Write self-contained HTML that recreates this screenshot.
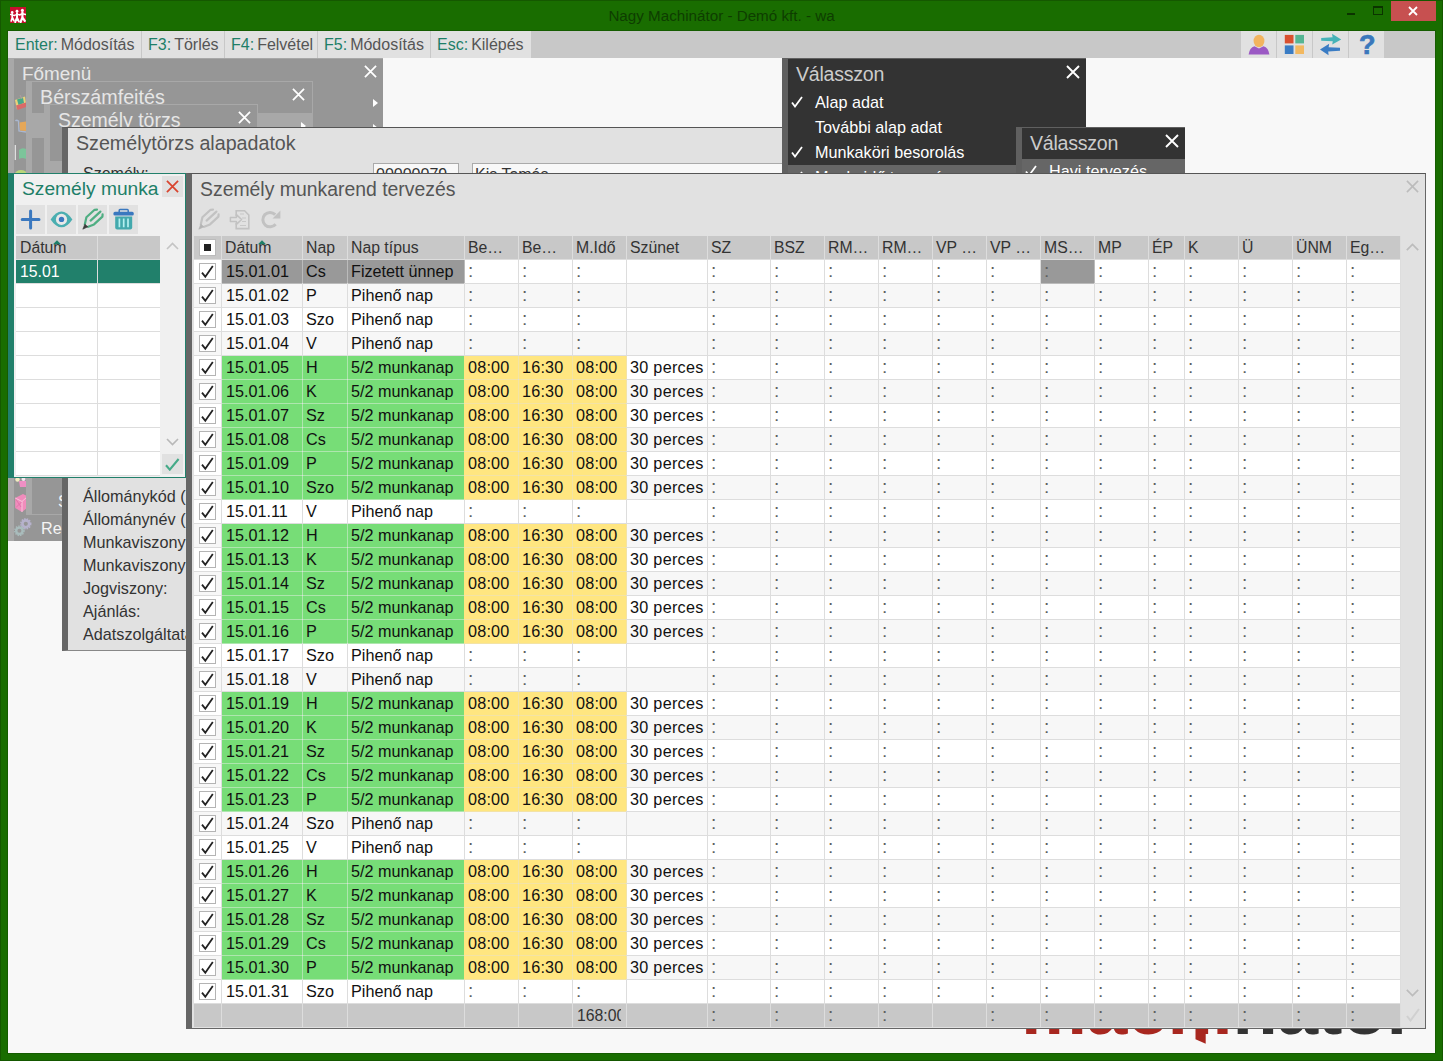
<!DOCTYPE html>
<html lang="hu"><head><meta charset="utf-8"><title>Nagy Machinátor - Demó kft. - wa</title>
<style>
*{box-sizing:border-box;margin:0;padding:0}
html,body{width:1443px;height:1061px;overflow:hidden}
body{background:#196d00;font-family:"Liberation Sans",sans-serif;font-size:16px;color:#222;position:relative}
.abs,.abs *{position:absolute}
div,span,svg{position:absolute;white-space:nowrap}
#client{left:8px;top:31px;width:1427px;height:1022px;background:#f8f8f8;overflow:hidden}
#tb{left:0;top:0;width:1427px;height:27px;background:#c8c8c8}
.tbb{top:0;height:27px;background:#e1e1e1;font-size:16px;line-height:28.4px;color:#555}
.tbb b{font-weight:normal;color:#1e7f68;position:static}
.tbb i{font-style:normal;position:static;color:#555}
.ttl{font-size:19.3px;line-height:24px}
.c{height:23px;line-height:23px;font-size:16.2px;overflow:hidden;color:#111;padding-left:4px}
.g{background:#77dd77;box-shadow:1px 0 0 #aee6ae,0 1px 0 #aee6ae}.y{background:#ffe680;box-shadow:1px 0 0 #f3e3a6,0 1px 0 #f3e3a6}.w{background:#fff}.e{background:#f7f7f7}.s{background:#999;color:#111;box-shadow:1px 0 0 #bbb,0 1px 0 #bbb}
.h{background:#c8c8c8;color:#333;font-size:15.8px}
.c.k{padding-left:3px;color:#606060;font-size:19px;line-height:22.3px}
.col{font-size:16px;line-height:23px;color:#333;width:12px;white-space:pre}
</style></head><body>

<div style="left:0;top:0;width:1443px;height:1061px;border:1px solid #155800"></div>
<div id="titlebar" style="left:0;top:0;width:1443px;height:31px">
<svg style="left:10px;top:7px" width="16" height="16" viewBox="0 0 16 16"><rect width="16" height="16" fill="#c8102e"/><g fill="#fff"><circle cx="2.2" cy="5.4" r="1.3"/><circle cx="7" cy="4.2" r="1.4"/><circle cx="12.4" cy="3.2" r="1.5"/></g><g stroke="#fff" fill="none" stroke-linecap="round" stroke-linejoin="round"><path d="M2.2 6.8V10.4M1.2 14L2.3 10.4L3.9 13.6" stroke-width="1.7"/><path d="M0.2 7.4L2.2 8L4.6 8.6" stroke-width="1.3"/><path d="M7 6V10.6M5.2 15L7 10.6L8.8 14.4" stroke-width="2"/><path d="M4.4 8.4L7 7.4L9.8 7.8" stroke-width="1.4"/><path d="M12.4 5V10.4M10.6 15L12.4 10.4L14.8 13.8" stroke-width="2.2"/><path d="M9.8 7.8L12.4 6.8L15.8 7.6" stroke-width="1.5"/></g></svg>
<span style="left:0;width:1443px;top:6px;text-align:center;font-size:15.2px;line-height:20px;color:#0e3d00">Nagy Machinátor - Demó kft. - wa</span>
<div style="left:1347px;top:13px;width:8px;height:2px;background:#0b3300"></div>
<div style="left:1373px;top:6px;width:10px;height:9px;border:1px solid #0b3300;border-top-width:2px"></div>
<div style="left:1391px;top:1px;width:45px;height:20px;background:#c75050"></div>
<svg style="left:1408px;top:6px" width="10" height="10" viewBox="0 0 10 10"><path d="M1 1L9 9M9 1L1 9" stroke="#fff" stroke-width="1.8"/></svg>
</div>
<div style="left:7px;top:30px;width:1429px;height:1024px;background:#155c00"></div>
<div id="client">
<div id="tb">
<div class="tbb" style="left:0px;width:133px;padding-left:7px"><b>Enter:</b><i style="margin-left:3px">Módosítás</i></div>
<div class="tbb" style="left:134px;width:82px;padding-left:6px"><b>F3:</b><i style="margin-left:3px">Törlés</i></div>
<div class="tbb" style="left:217px;width:92px;padding-left:6px"><b>F4:</b><i style="margin-left:3px">Felvétel</i></div>
<div class="tbb" style="left:310px;width:112px;padding-left:6px"><b>F5:</b><i style="margin-left:3px">Módosítás</i></div>
<div class="tbb" style="left:423px;width:100px;padding-left:6px"><b>Esc:</b><i style="margin-left:3px">Kilépés</i></div>
<div class="tbb" style="left:1233px;width:35px"></div>
<div class="tbb" style="left:1269px;width:35px"></div>
<div class="tbb" style="left:1305px;width:35px"></div>
<div class="tbb" style="left:1341px;width:35px"></div>
<svg style="left:1240px;top:3px" width="22" height="21" viewBox="0 0 22 21"><path d="M0.6 20.6Q1.5 13.5 6.5 12.2L11 14.5L15.5 12.2Q20.5 13.5 21.4 20.6Z" fill="#9b59c4"/><ellipse cx="11" cy="7" rx="5.4" ry="6.2" fill="#f2b45f"/></svg>
<svg style="left:1276px;top:3px" width="22" height="22" viewBox="0 0 22 22"><rect x="0.8" y="0.9" width="8.7" height="8.5" fill="#d9502f"/><rect x="11.3" y="0.9" width="8.7" height="8.5" fill="#55b593"/><rect x="0.8" y="11.4" width="8.7" height="8.6" fill="#3a7cc4"/><rect x="11.3" y="11.4" width="8.7" height="8.6" fill="#f2b860"/></svg>
<svg style="left:1311px;top:2px" width="23" height="23" viewBox="0 0 23 23"><path d="M2.2 5L13.6 4.2L13 0.8L22.2 6.4L13.2 11.6L13.8 8.2L2.2 7.8Z" fill="#45b3b8"/><path d="M21 14.8L9.6 14.2L10.2 10.8L1 16.4L9.6 22.2L9.2 18.4L21 17.8Z" fill="#3a7cc4"/></svg>
<span style="left:1351px;top:-1px;font-size:27px;line-height:30px;font-weight:bold;color:#3a78bc;-webkit-text-stroke:0.7px #3a78bc">?</span>
</div>
</div>
<div style="left:8px;top:58px;width:375px;height:483px;background:#969696;border-left:6px solid #a8a8a8;border-top:1px solid #a8a8a8"></div>
<span class="ttl" style="left:22px;top:62px;font-size:18.9px;color:#e6e6e6">Főmenü</span>
<svg style="left:364px;top:65px" width="13" height="13" viewBox="0 0 14 14"><path d="M1 1L13 13M13 1L1 13" stroke="#fff" stroke-width="1.9"/></svg>
<svg style="left:373px;top:99px" width="5" height="8" viewBox="0 0 5 8"><path d="M0 0L5 4L0 8Z" fill="#fff"/></svg>
<svg style="left:373px;top:124px" width="5" height="8" viewBox="0 0 5 8"><path d="M0 0L5 4L0 8Z" fill="#fff"/></svg>
<svg style="left:14px;top:92px" width="12" height="84" viewBox="14 92 12 84"><path d="M15 100L25 96.5L26 104L17 109.5Z" fill="#e9d27a"/><path d="M17 99.5L23 97.5L24 103L18.5 105Z" fill="#46a88a"/><path d="M16 105.5L26 102.5L26 107L17.5 110Z" fill="#d96a68"/><path d="M20 95L22 99" stroke="#b0a0a0" stroke-width="1"/><path d="M15.5 121Q16.5 119.5 18.5 121L19 131L26 132" fill="none" stroke="#a9b7d0" stroke-width="1.4"/><path d="M19.5 122.5L26 121.5V131L20 130.5Z" fill="#e5a758"/><path d="M15.3 145V160" stroke="#e8e8e8" stroke-width="1.2"/><path d="M19 150Q22 147 26 149V159Q22 157 19 159Z" fill="#7cc49a"/><ellipse cx="21" cy="174" rx="6" ry="4" fill="#b9d67a"/></svg>
<span style="left:41px;top:517px;font-size:16.2px;line-height:22px;color:#f4f4f4">Re</span>
<div style="left:26px;top:81px;width:287px;height:434px;background:#969696;border:1px solid #a8a8a8;border-left:6px solid #a8a8a8"></div>
<div style="left:32px;top:113px;width:280px;height:25px;background:#a8a8a8"></div>
<span class="ttl" style="left:40px;top:85px;font-size:19.7px;color:#e6e6e6">Bérszámfeités</span>
<svg style="left:292px;top:88px" width="13" height="13" viewBox="0 0 14 14"><path d="M1 1L13 13M13 1L1 13" stroke="#fff" stroke-width="1.9"/></svg>
<svg style="left:301px;top:122px" width="5" height="8" viewBox="0 0 5 8"><path d="M0 0L5 4L0 8Z" fill="#fff"/></svg>
<span style="left:58px;top:490px;font-size:16.2px;line-height:22px;color:#f4f4f4">S</span>
<div style="left:44px;top:104px;width:214px;height:100px;background:#969696;border:1px solid #a8a8a8;border-left:6px solid #a8a8a8"></div>
<div style="left:50px;top:161px;width:207px;height:25px;background:#a8a8a8"></div>
<span class="ttl" style="left:58px;top:108px;font-size:19.5px;color:#e6e6e6">Személy törzs</span>
<svg style="left:238px;top:111px" width="13" height="13" viewBox="0 0 14 14"><path d="M1 1L13 13M13 1L1 13" stroke="#fff" stroke-width="1.9"/></svg>
<div style="left:62px;top:127px;width:960px;height:524px;background:#e1e1e1;border-left:6px solid #666;border-top:1px solid #555;border-bottom:1px solid #888"></div>
<span class="ttl" style="left:76px;top:131px;font-size:19.67px;color:#555">Személytörzs alapadatok</span>
<span style="left:83px;top:164px;font-size:16px;line-height:20px;color:#333">Személy:</span>
<div style="left:373px;top:163px;width:86px;height:24px;background:#f8f8f8;border:1px solid #aaa;font-size:16px;line-height:22px;padding-left:2px;color:#333">00000079</div>
<div style="left:472px;top:163px;width:420px;height:24px;background:#f8f8f8;border:1px solid #aaa;font-size:16px;line-height:22px;padding-left:2px;color:#333">Kis Tamás</div>
<span style="left:83px;top:486px;font-size:16.2px;line-height:20px;color:#333">Állománykód (</span>
<span style="left:83px;top:509px;font-size:16.2px;line-height:20px;color:#333">Állománynév (</span>
<span style="left:83px;top:532px;font-size:16.2px;line-height:20px;color:#333">Munkaviszony</span>
<span style="left:83px;top:555px;font-size:16.2px;line-height:20px;color:#333">Munkaviszony</span>
<span style="left:83px;top:578px;font-size:16.2px;line-height:20px;color:#333">Jogviszony:</span>
<span style="left:83px;top:601px;font-size:16.2px;line-height:20px;color:#333">Ajánlás:</span>
<span style="left:83px;top:624px;font-size:16.2px;line-height:20px;color:#333">Adatszolgáltatás</span>
<svg style="left:14px;top:476px" width="12" height="64" viewBox="14 476 12 64"><circle cx="17.5" cy="479.5" r="2.2" fill="#f3ecc0"/><circle cx="23.5" cy="479" r="2" fill="#f6e8f0"/><path d="M19 481H26V487H20Z" fill="#ef8fc4"/><path d="M15.2 498L23 494L27 496V508L22 512L15.2 508Z" fill="#f08cbc"/><path d="M15.2 498L22 501.5V512M22 501.5L27 497" stroke="#f9c4dc" stroke-width="1" fill="none"/><path d="M16 499.5L21 507M21.5 502L16 507.5" stroke="#e070a8" stroke-width="0.9"/></svg>
<svg style="left:13px;top:516px" width="22" height="22" viewBox="13 516 22 22"><circle cx="25.8" cy="523.8" r="3.4" fill="none" stroke="#b6b2cc" stroke-width="2.6"/><circle cx="25.8" cy="523.8" r="4.9" fill="none" stroke="#b6b2cc" stroke-width="1.6" stroke-dasharray="1.5 1.1"/><circle cx="19.4" cy="530.8" r="3.2" fill="none" stroke="#a9bcbc" stroke-width="2.4"/><circle cx="19.4" cy="530.8" r="4.6" fill="none" stroke="#a9bcbc" stroke-width="1.5" stroke-dasharray="1.4 1.1"/></svg>
<div style="left:782px;top:58px;width:304px;height:120px;background:#606060"></div>
<div style="left:788px;top:59px;width:298px;height:106px;background:#333"></div>
<div style="left:788px;top:165px;width:298px;height:12px;background:#666"></div>
<span class="ttl" style="left:796px;top:62px;font-size:19.6px;letter-spacing:-0.25px;color:#ccc">Válasszon</span>
<svg style="left:1066px;top:65px" width="14" height="14" viewBox="0 0 14 14"><path d="M1 1L13 13M13 1L1 13" stroke="#fff" stroke-width="1.9"/></svg>
<span style="left:815px;top:92px;font-size:16.2px;line-height:21px;color:#fff">Alap adat</span>
<svg style="left:791px;top:96px" width="12" height="12" viewBox="0 0 12 12"><path d="M1 6.5L4 10.5L11 1" fill="none" stroke="#fff" stroke-width="1.8"/></svg>
<span style="left:815px;top:117px;font-size:16.2px;line-height:21px;color:#fff">További alap adat</span>
<span style="left:815px;top:142px;font-size:16.2px;line-height:21px;color:#fff">Munkaköri besorolás</span>
<svg style="left:791px;top:146px" width="12" height="12" viewBox="0 0 12 12"><path d="M1 6.5L4 10.5L11 1" fill="none" stroke="#fff" stroke-width="1.8"/></svg>
<span style="left:815px;top:167px;font-size:16.2px;line-height:21px;color:#fff">Munkaidő tervezés</span>
<svg style="left:791px;top:171px" width="12" height="12" viewBox="0 0 12 12"><path d="M1 6.5L4 10.5L11 1" fill="none" stroke="#fff" stroke-width="1.8"/></svg>
<div style="left:1016px;top:127px;width:169px;height:60px;background:#606060"></div>
<div style="left:1022px;top:128px;width:163px;height:31px;background:#333"></div>
<div style="left:1022px;top:159px;width:163px;height:25px;background:#666"></div>
<span class="ttl" style="left:1030px;top:131px;font-size:19.6px;letter-spacing:-0.25px;color:#ccc">Válasszon</span>
<svg style="left:1165px;top:134px" width="14" height="14" viewBox="0 0 14 14"><path d="M1 1L13 13M13 1L1 13" stroke="#fff" stroke-width="1.9"/></svg>
<span style="left:1049px;top:161px;font-size:16.2px;line-height:20px;color:#fff">Havi tervezés</span>
<svg style="left:1025px;top:165px" width="12" height="12" viewBox="0 0 12 12"><path d="M1 6.5L4 10.5L11 1" fill="none" stroke="#fff" stroke-width="1.8"/></svg>
<span id="logo" style="left:1021px;top:972.4px;font-size:74px;line-height:74px;font-weight:bold;letter-spacing:-0.5px;color:#a8271f">machi<span style="position:static;color:#333">nator</span></span>
<svg style="left:1190px;top:1029px" width="20" height="16" viewBox="1190 1029 20 16"><path d="M1195.5 1029H1205.7V1043.8L1195.5 1039.2Z" fill="#a8271f"/></svg>
<div style="left:8px;top:173px;width:178px;height:305px;background:#f0f0f0;border-left:6px solid #21806b;border-top:1px solid #21806b;border-bottom:1px solid #21806b;border-right:1px solid #21806b"></div>
<span class="ttl" style="left:22px;top:177px;font-size:19.2px;color:#1e7f68">Személy munka</span>
<div style="left:162px;top:176px;width:21px;height:21px;background:#e1e1e1"></div>
<svg style="left:166px;top:180px" width="13" height="13" viewBox="0 0 14 14"><path d="M1 1L13 13M13 1L1 13" stroke="#d9452f" stroke-width="1.9"/></svg>
<div style="left:16px;top:205px;width:29px;height:29px;background:#e1e1e1"></div>
<div style="left:47px;top:205px;width:29px;height:29px;background:#e1e1e1"></div>
<div style="left:78px;top:205px;width:29px;height:29px;background:#e1e1e1"></div>
<div style="left:109px;top:205px;width:29px;height:29px;background:#e1e1e1"></div>
<svg style="left:14px;top:203px" width="128" height="32" viewBox="14 203 128 32"><path d="M30.6 211V228M22.2 219.5H39" stroke="#3a78bf" stroke-width="3" stroke-linecap="round" fill="none"/><path d="M50.6 219.4Q61.5 203.5 72.4 219.4Q61.5 235.3 50.6 219.4Z" fill="#4aaeb0"/><circle cx="61.5" cy="219.4" r="5.6" fill="#e8e8e8"/><circle cx="61.5" cy="219.4" r="2.7" fill="#3a78bf"/><g stroke="#4fae82" stroke-width="2.2" fill="none" stroke-linecap="round" stroke-linejoin="round"><path d="M84.8 224.5L86.4 217.2L94.6 209.8L97 209.6"/><path d="M90.6 220.6L100.4 211.6"/><path d="M88.2 226.8L94 224.4L102.4 216.6L102.6 214.4"/></g><path d="M82.8 229.2L84.8 224.2L88 226.8Z" fill="#3c3c3c" stroke="#3c3c3c" stroke-width="0.6" stroke-linejoin="round"/><path d="M119.2 212.2V210.4Q119.2 209.6 120 209.6H127.4Q128.2 209.6 128.2 210.4V212.2" fill="none" stroke="#3a78bf" stroke-width="1.5"/><rect x="113.4" y="211.8" width="20.4" height="3.8" rx="1.6" fill="#3a78bf"/><path d="M115.2 216.4H132.2V227.6Q132.2 229.6 130.2 229.6H117.2Q115.2 229.6 115.2 227.6Z" fill="#43a9ad"/><path d="M119.4 218.4V227.2M123.7 218.4V227.2M128 218.4V227.2" stroke="#b4f0f0" stroke-width="1.7"/></svg>
<div style="left:16px;top:236px;width:144px;height:240px;background:#ddd"></div>
<div class="c h" style="left:16px;top:236px;width:81px;padding-left:4px">Dátum</div><div class="c h" style="left:98px;top:236px;width:62px"></div>
<svg style="left:52.5px;top:240px" width="8" height="4.5" viewBox="0 0 10 5"><path d="M0 5L5 0L10 5Z" fill="#1e7f68"/></svg>
<div class="c" style="left:16px;top:260px;width:81px;background:#21806b;color:#fff;padding-left:4px;font-size:15.8px">15.01</div><div class="c" style="left:98px;top:260px;width:62px;background:#21806b"></div>
<div class="c w" style="left:16px;top:284px;width:81px"></div><div class="c w" style="left:98px;top:284px;width:62px"></div>
<div class="c w" style="left:16px;top:308px;width:81px"></div><div class="c w" style="left:98px;top:308px;width:62px"></div>
<div class="c w" style="left:16px;top:332px;width:81px"></div><div class="c w" style="left:98px;top:332px;width:62px"></div>
<div class="c w" style="left:16px;top:356px;width:81px"></div><div class="c w" style="left:98px;top:356px;width:62px"></div>
<div class="c w" style="left:16px;top:380px;width:81px"></div><div class="c w" style="left:98px;top:380px;width:62px"></div>
<div class="c w" style="left:16px;top:404px;width:81px"></div><div class="c w" style="left:98px;top:404px;width:62px"></div>
<div class="c w" style="left:16px;top:428px;width:81px"></div><div class="c w" style="left:98px;top:428px;width:62px"></div>
<div class="c w" style="left:16px;top:452px;width:81px"></div><div class="c w" style="left:98px;top:452px;width:62px"></div>
<div style="left:160px;top:236px;width:25px;height:241px;background:#f0f0f0"></div>
<svg style="left:166px;top:242px" width="13" height="8" viewBox="0 0 13 8"><path d="M1 7L6.5 1.5L12 7" fill="none" stroke="#c4c4c4" stroke-width="1.6"/></svg>
<svg style="left:166px;top:438px" width="13" height="8" viewBox="0 0 13 8"><path d="M1 1L6.5 6.5L12 1" fill="none" stroke="#b8b8b8" stroke-width="1.6"/></svg>
<div style="left:162px;top:454px;width:21px;height:20px;background:#e1e1e1"></div>
<svg style="left:165px;top:458px" width="15" height="13" viewBox="0 0 15 13"><path d="M1 7.2L4.8 11.6L13.6 1" fill="none" stroke="#45aa88" stroke-width="2.1"/></svg>
<div id="mw" style="left:186px;top:173px;width:1240px;height:856px;background:#e1e1e1;border-top:1px solid #555;border-left:6px solid #666;border-right:1px solid #666;border-bottom:1px solid #666"></div>
<span class="ttl" style="left:200px;top:177px;font-size:19.4px;color:#555">Személy munkarend tervezés</span>
<svg style="left:196px;top:205px" width="90" height="28" viewBox="196 205 90 28"><g stroke="#c2c2c2" stroke-width="2.2" fill="none" stroke-linecap="round" stroke-linejoin="round"><path d="M200.8 224.5L202.4 217.2L210.6 209.8L213 209.6"/><path d="M206.6 220.6L216.4 211.6"/><path d="M204.2 226.8L210 224.4L218.4 216.6L218.6 214.4"/></g><path d="M198.8 229.2L200.8 224.2L204 226.8Z" fill="#b4b4b4" stroke="#b4b4b4" stroke-width="0.6" stroke-linejoin="round"/><path d="M236.2 216V210.8H244.6L248.8 215V228.6H236.2V223" fill="none" stroke="#c2c2c2" stroke-width="1.6"/><path d="M240 214H244M242 218H246M242 221.5H246M240 225.5H246" stroke="#c8c8c8" stroke-width="1.2"/><path d="M230.4 217.6H236.4V214.6L241.6 219.5L236.4 224.4V221.4H230.4Z" fill="#e1e1e1" stroke="#c2c2c2" stroke-width="1.5" stroke-linejoin="round"/><path d="M275.6 224.2A7.2 7.2 0 1 1 275.2 214.6" fill="none" stroke="#c2c2c2" stroke-width="3"/><path d="M280.4 210.6V218.4H272.6Z" fill="#c2c2c2"/></svg>
<div style="left:194px;top:236px;width:1207px;height:791px;background:#ddd"></div>
<div style="left:1401px;top:236px;width:23px;height:792px;background:#e1e1e1"></div>
<div class="c h" style="left:194px;top:236px;width:27px"></div>
<div style="left:199px;top:239px;width:17px;height:17px;background:#fff;border:1px solid #bbb"></div><div style="left:204px;top:244px;width:7px;height:7px;background:#222"></div>
<div class="c h" style="left:222px;top:236px;width:80px;padding-left:3px">Dátum</div>
<div class="c h" style="left:303px;top:236px;width:44px;padding-left:3px">Nap</div>
<div class="c h" style="left:348px;top:236px;width:116px;padding-left:3px">Nap típus</div>
<div class="c h" style="left:465px;top:236px;width:53px;padding-left:3px">Be…</div>
<div class="c h" style="left:519px;top:236px;width:53px;padding-left:3px">Be…</div>
<div class="c h" style="left:573px;top:236px;width:53px;padding-left:3px">M.Idő</div>
<div class="c h" style="left:627px;top:236px;width:80px;padding-left:3px">Szünet</div>
<div class="c h" style="left:708px;top:236px;width:62px;padding-left:3px">SZ</div>
<div class="c h" style="left:771px;top:236px;width:53px;padding-left:3px">BSZ</div>
<div class="c h" style="left:825px;top:236px;width:53px;padding-left:3px">RM…</div>
<div class="c h" style="left:879px;top:236px;width:53px;padding-left:3px">RM…</div>
<div class="c h" style="left:933px;top:236px;width:53px;padding-left:3px">VP …</div>
<div class="c h" style="left:987px;top:236px;width:53px;padding-left:3px">VP …</div>
<div class="c h" style="left:1041px;top:236px;width:53px;padding-left:3px">MS…</div>
<div class="c h" style="left:1095px;top:236px;width:53px;padding-left:3px">MP</div>
<div class="c h" style="left:1149px;top:236px;width:35px;padding-left:3px">ÉP</div>
<div class="c h" style="left:1185px;top:236px;width:53px;padding-left:3px">K</div>
<div class="c h" style="left:1239px;top:236px;width:53px;padding-left:3px">Ü</div>
<div class="c h" style="left:1293px;top:236px;width:53px;padding-left:3px">ÜNM</div>
<div class="c h" style="left:1347px;top:236px;width:53px;padding-left:3px">Eg…</div>
<svg style="left:257.5px;top:240px" width="8" height="4.5" viewBox="0 0 10 5"><path d="M0 5L5 0L10 5Z" fill="#1e7f68"/></svg>
<div class="c w" style="left:194px;top:260px;width:27px"></div>
<svg style="left:199px;top:263px" width="17" height="17" viewBox="0 0 17 17"><rect x="0.5" y="0.5" width="16" height="16" fill="#fff" stroke="#b4b4b4"/><path d="M3 9.6L6.3 13.8L13.8 3" fill="none" stroke="#222" stroke-width="1.8"/></svg>
<div class="c s" style="left:222px;top:260px;width:80px">15.01.01</div>
<div class="c s" style="left:303px;top:260px;width:44px;padding-left:3px">Cs</div>
<div class="c s" style="left:348px;top:260px;width:116px;padding-left:3px">Fizetett ünnep</div>
<div class="c k w" style="left:465px;top:260px;width:53px">:</div>
<div class="c k w" style="left:519px;top:260px;width:53px">:</div>
<div class="c k w" style="left:573px;top:260px;width:53px">:</div>
<div class="c w" style="left:627px;top:260px;width:80px;padding-left:3px"></div>
<div class="c k w" style="left:708px;top:260px;width:62px">:</div>
<div class="c k w" style="left:771px;top:260px;width:53px">:</div>
<div class="c k w" style="left:825px;top:260px;width:53px">:</div>
<div class="c k w" style="left:879px;top:260px;width:53px">:</div>
<div class="c k w" style="left:933px;top:260px;width:53px">:</div>
<div class="c k w" style="left:987px;top:260px;width:53px">:</div>
<div class="c k s" style="left:1041px;top:260px;width:53px">:</div>
<div class="c k w" style="left:1095px;top:260px;width:53px">:</div>
<div class="c k w" style="left:1149px;top:260px;width:35px">:</div>
<div class="c k w" style="left:1185px;top:260px;width:53px">:</div>
<div class="c k w" style="left:1239px;top:260px;width:53px">:</div>
<div class="c k w" style="left:1293px;top:260px;width:53px">:</div>
<div class="c k w" style="left:1347px;top:260px;width:53px">:</div>
<div class="c e" style="left:194px;top:284px;width:27px"></div>
<svg style="left:199px;top:287px" width="17" height="17" viewBox="0 0 17 17"><rect x="0.5" y="0.5" width="16" height="16" fill="#fff" stroke="#b4b4b4"/><path d="M3 9.6L6.3 13.8L13.8 3" fill="none" stroke="#222" stroke-width="1.8"/></svg>
<div class="c e" style="left:222px;top:284px;width:80px">15.01.02</div>
<div class="c e" style="left:303px;top:284px;width:44px;padding-left:3px">P</div>
<div class="c e" style="left:348px;top:284px;width:116px;padding-left:3px">Pihenő nap</div>
<div class="c k e" style="left:465px;top:284px;width:53px">:</div>
<div class="c k e" style="left:519px;top:284px;width:53px">:</div>
<div class="c k e" style="left:573px;top:284px;width:53px">:</div>
<div class="c e" style="left:627px;top:284px;width:80px;padding-left:3px"></div>
<div class="c k e" style="left:708px;top:284px;width:62px">:</div>
<div class="c k e" style="left:771px;top:284px;width:53px">:</div>
<div class="c k e" style="left:825px;top:284px;width:53px">:</div>
<div class="c k e" style="left:879px;top:284px;width:53px">:</div>
<div class="c k e" style="left:933px;top:284px;width:53px">:</div>
<div class="c k e" style="left:987px;top:284px;width:53px">:</div>
<div class="c k e" style="left:1041px;top:284px;width:53px">:</div>
<div class="c k e" style="left:1095px;top:284px;width:53px">:</div>
<div class="c k e" style="left:1149px;top:284px;width:35px">:</div>
<div class="c k e" style="left:1185px;top:284px;width:53px">:</div>
<div class="c k e" style="left:1239px;top:284px;width:53px">:</div>
<div class="c k e" style="left:1293px;top:284px;width:53px">:</div>
<div class="c k e" style="left:1347px;top:284px;width:53px">:</div>
<div class="c w" style="left:194px;top:308px;width:27px"></div>
<svg style="left:199px;top:311px" width="17" height="17" viewBox="0 0 17 17"><rect x="0.5" y="0.5" width="16" height="16" fill="#fff" stroke="#b4b4b4"/><path d="M3 9.6L6.3 13.8L13.8 3" fill="none" stroke="#222" stroke-width="1.8"/></svg>
<div class="c w" style="left:222px;top:308px;width:80px">15.01.03</div>
<div class="c w" style="left:303px;top:308px;width:44px;padding-left:3px">Szo</div>
<div class="c w" style="left:348px;top:308px;width:116px;padding-left:3px">Pihenő nap</div>
<div class="c k w" style="left:465px;top:308px;width:53px">:</div>
<div class="c k w" style="left:519px;top:308px;width:53px">:</div>
<div class="c k w" style="left:573px;top:308px;width:53px">:</div>
<div class="c w" style="left:627px;top:308px;width:80px;padding-left:3px"></div>
<div class="c k w" style="left:708px;top:308px;width:62px">:</div>
<div class="c k w" style="left:771px;top:308px;width:53px">:</div>
<div class="c k w" style="left:825px;top:308px;width:53px">:</div>
<div class="c k w" style="left:879px;top:308px;width:53px">:</div>
<div class="c k w" style="left:933px;top:308px;width:53px">:</div>
<div class="c k w" style="left:987px;top:308px;width:53px">:</div>
<div class="c k w" style="left:1041px;top:308px;width:53px">:</div>
<div class="c k w" style="left:1095px;top:308px;width:53px">:</div>
<div class="c k w" style="left:1149px;top:308px;width:35px">:</div>
<div class="c k w" style="left:1185px;top:308px;width:53px">:</div>
<div class="c k w" style="left:1239px;top:308px;width:53px">:</div>
<div class="c k w" style="left:1293px;top:308px;width:53px">:</div>
<div class="c k w" style="left:1347px;top:308px;width:53px">:</div>
<div class="c e" style="left:194px;top:332px;width:27px"></div>
<svg style="left:199px;top:335px" width="17" height="17" viewBox="0 0 17 17"><rect x="0.5" y="0.5" width="16" height="16" fill="#fff" stroke="#b4b4b4"/><path d="M3 9.6L6.3 13.8L13.8 3" fill="none" stroke="#222" stroke-width="1.8"/></svg>
<div class="c e" style="left:222px;top:332px;width:80px">15.01.04</div>
<div class="c e" style="left:303px;top:332px;width:44px;padding-left:3px">V</div>
<div class="c e" style="left:348px;top:332px;width:116px;padding-left:3px">Pihenő nap</div>
<div class="c k e" style="left:465px;top:332px;width:53px">:</div>
<div class="c k e" style="left:519px;top:332px;width:53px">:</div>
<div class="c k e" style="left:573px;top:332px;width:53px">:</div>
<div class="c e" style="left:627px;top:332px;width:80px;padding-left:3px"></div>
<div class="c k e" style="left:708px;top:332px;width:62px">:</div>
<div class="c k e" style="left:771px;top:332px;width:53px">:</div>
<div class="c k e" style="left:825px;top:332px;width:53px">:</div>
<div class="c k e" style="left:879px;top:332px;width:53px">:</div>
<div class="c k e" style="left:933px;top:332px;width:53px">:</div>
<div class="c k e" style="left:987px;top:332px;width:53px">:</div>
<div class="c k e" style="left:1041px;top:332px;width:53px">:</div>
<div class="c k e" style="left:1095px;top:332px;width:53px">:</div>
<div class="c k e" style="left:1149px;top:332px;width:35px">:</div>
<div class="c k e" style="left:1185px;top:332px;width:53px">:</div>
<div class="c k e" style="left:1239px;top:332px;width:53px">:</div>
<div class="c k e" style="left:1293px;top:332px;width:53px">:</div>
<div class="c k e" style="left:1347px;top:332px;width:53px">:</div>
<div class="c w" style="left:194px;top:356px;width:27px"></div>
<svg style="left:199px;top:359px" width="17" height="17" viewBox="0 0 17 17"><rect x="0.5" y="0.5" width="16" height="16" fill="#fff" stroke="#b4b4b4"/><path d="M3 9.6L6.3 13.8L13.8 3" fill="none" stroke="#222" stroke-width="1.8"/></svg>
<div class="c g" style="left:222px;top:356px;width:80px">15.01.05</div>
<div class="c g" style="left:303px;top:356px;width:44px;padding-left:3px">H</div>
<div class="c g" style="left:348px;top:356px;width:116px;padding-left:3px">5/2 munkanap</div>
<div class="c y" style="left:464px;top:356px;width:54px;padding-left:4px;letter-spacing:0.2px">08:00</div>
<div class="c y" style="left:519px;top:356px;width:53px;padding-left:3px;letter-spacing:0.2px">16:30</div>
<div class="c y" style="left:573px;top:356px;width:53px;padding-left:3px;letter-spacing:0.2px">08:00</div>
<div class="c w" style="left:627px;top:356px;width:80px;padding-left:3px;letter-spacing:0.28px">30 perces</div>
<div class="c k w" style="left:708px;top:356px;width:62px">:</div>
<div class="c k w" style="left:771px;top:356px;width:53px">:</div>
<div class="c k w" style="left:825px;top:356px;width:53px">:</div>
<div class="c k w" style="left:879px;top:356px;width:53px">:</div>
<div class="c k w" style="left:933px;top:356px;width:53px">:</div>
<div class="c k w" style="left:987px;top:356px;width:53px">:</div>
<div class="c k w" style="left:1041px;top:356px;width:53px">:</div>
<div class="c k w" style="left:1095px;top:356px;width:53px">:</div>
<div class="c k w" style="left:1149px;top:356px;width:35px">:</div>
<div class="c k w" style="left:1185px;top:356px;width:53px">:</div>
<div class="c k w" style="left:1239px;top:356px;width:53px">:</div>
<div class="c k w" style="left:1293px;top:356px;width:53px">:</div>
<div class="c k w" style="left:1347px;top:356px;width:53px">:</div>
<div class="c e" style="left:194px;top:380px;width:27px"></div>
<svg style="left:199px;top:383px" width="17" height="17" viewBox="0 0 17 17"><rect x="0.5" y="0.5" width="16" height="16" fill="#fff" stroke="#b4b4b4"/><path d="M3 9.6L6.3 13.8L13.8 3" fill="none" stroke="#222" stroke-width="1.8"/></svg>
<div class="c g" style="left:222px;top:380px;width:80px">15.01.06</div>
<div class="c g" style="left:303px;top:380px;width:44px;padding-left:3px">K</div>
<div class="c g" style="left:348px;top:380px;width:116px;padding-left:3px">5/2 munkanap</div>
<div class="c y" style="left:464px;top:380px;width:54px;padding-left:4px;letter-spacing:0.2px">08:00</div>
<div class="c y" style="left:519px;top:380px;width:53px;padding-left:3px;letter-spacing:0.2px">16:30</div>
<div class="c y" style="left:573px;top:380px;width:53px;padding-left:3px;letter-spacing:0.2px">08:00</div>
<div class="c e" style="left:627px;top:380px;width:80px;padding-left:3px;letter-spacing:0.28px">30 perces</div>
<div class="c k e" style="left:708px;top:380px;width:62px">:</div>
<div class="c k e" style="left:771px;top:380px;width:53px">:</div>
<div class="c k e" style="left:825px;top:380px;width:53px">:</div>
<div class="c k e" style="left:879px;top:380px;width:53px">:</div>
<div class="c k e" style="left:933px;top:380px;width:53px">:</div>
<div class="c k e" style="left:987px;top:380px;width:53px">:</div>
<div class="c k e" style="left:1041px;top:380px;width:53px">:</div>
<div class="c k e" style="left:1095px;top:380px;width:53px">:</div>
<div class="c k e" style="left:1149px;top:380px;width:35px">:</div>
<div class="c k e" style="left:1185px;top:380px;width:53px">:</div>
<div class="c k e" style="left:1239px;top:380px;width:53px">:</div>
<div class="c k e" style="left:1293px;top:380px;width:53px">:</div>
<div class="c k e" style="left:1347px;top:380px;width:53px">:</div>
<div class="c w" style="left:194px;top:404px;width:27px"></div>
<svg style="left:199px;top:407px" width="17" height="17" viewBox="0 0 17 17"><rect x="0.5" y="0.5" width="16" height="16" fill="#fff" stroke="#b4b4b4"/><path d="M3 9.6L6.3 13.8L13.8 3" fill="none" stroke="#222" stroke-width="1.8"/></svg>
<div class="c g" style="left:222px;top:404px;width:80px">15.01.07</div>
<div class="c g" style="left:303px;top:404px;width:44px;padding-left:3px">Sz</div>
<div class="c g" style="left:348px;top:404px;width:116px;padding-left:3px">5/2 munkanap</div>
<div class="c y" style="left:464px;top:404px;width:54px;padding-left:4px;letter-spacing:0.2px">08:00</div>
<div class="c y" style="left:519px;top:404px;width:53px;padding-left:3px;letter-spacing:0.2px">16:30</div>
<div class="c y" style="left:573px;top:404px;width:53px;padding-left:3px;letter-spacing:0.2px">08:00</div>
<div class="c w" style="left:627px;top:404px;width:80px;padding-left:3px;letter-spacing:0.28px">30 perces</div>
<div class="c k w" style="left:708px;top:404px;width:62px">:</div>
<div class="c k w" style="left:771px;top:404px;width:53px">:</div>
<div class="c k w" style="left:825px;top:404px;width:53px">:</div>
<div class="c k w" style="left:879px;top:404px;width:53px">:</div>
<div class="c k w" style="left:933px;top:404px;width:53px">:</div>
<div class="c k w" style="left:987px;top:404px;width:53px">:</div>
<div class="c k w" style="left:1041px;top:404px;width:53px">:</div>
<div class="c k w" style="left:1095px;top:404px;width:53px">:</div>
<div class="c k w" style="left:1149px;top:404px;width:35px">:</div>
<div class="c k w" style="left:1185px;top:404px;width:53px">:</div>
<div class="c k w" style="left:1239px;top:404px;width:53px">:</div>
<div class="c k w" style="left:1293px;top:404px;width:53px">:</div>
<div class="c k w" style="left:1347px;top:404px;width:53px">:</div>
<div class="c e" style="left:194px;top:428px;width:27px"></div>
<svg style="left:199px;top:431px" width="17" height="17" viewBox="0 0 17 17"><rect x="0.5" y="0.5" width="16" height="16" fill="#fff" stroke="#b4b4b4"/><path d="M3 9.6L6.3 13.8L13.8 3" fill="none" stroke="#222" stroke-width="1.8"/></svg>
<div class="c g" style="left:222px;top:428px;width:80px">15.01.08</div>
<div class="c g" style="left:303px;top:428px;width:44px;padding-left:3px">Cs</div>
<div class="c g" style="left:348px;top:428px;width:116px;padding-left:3px">5/2 munkanap</div>
<div class="c y" style="left:464px;top:428px;width:54px;padding-left:4px;letter-spacing:0.2px">08:00</div>
<div class="c y" style="left:519px;top:428px;width:53px;padding-left:3px;letter-spacing:0.2px">16:30</div>
<div class="c y" style="left:573px;top:428px;width:53px;padding-left:3px;letter-spacing:0.2px">08:00</div>
<div class="c e" style="left:627px;top:428px;width:80px;padding-left:3px;letter-spacing:0.28px">30 perces</div>
<div class="c k e" style="left:708px;top:428px;width:62px">:</div>
<div class="c k e" style="left:771px;top:428px;width:53px">:</div>
<div class="c k e" style="left:825px;top:428px;width:53px">:</div>
<div class="c k e" style="left:879px;top:428px;width:53px">:</div>
<div class="c k e" style="left:933px;top:428px;width:53px">:</div>
<div class="c k e" style="left:987px;top:428px;width:53px">:</div>
<div class="c k e" style="left:1041px;top:428px;width:53px">:</div>
<div class="c k e" style="left:1095px;top:428px;width:53px">:</div>
<div class="c k e" style="left:1149px;top:428px;width:35px">:</div>
<div class="c k e" style="left:1185px;top:428px;width:53px">:</div>
<div class="c k e" style="left:1239px;top:428px;width:53px">:</div>
<div class="c k e" style="left:1293px;top:428px;width:53px">:</div>
<div class="c k e" style="left:1347px;top:428px;width:53px">:</div>
<div class="c w" style="left:194px;top:452px;width:27px"></div>
<svg style="left:199px;top:455px" width="17" height="17" viewBox="0 0 17 17"><rect x="0.5" y="0.5" width="16" height="16" fill="#fff" stroke="#b4b4b4"/><path d="M3 9.6L6.3 13.8L13.8 3" fill="none" stroke="#222" stroke-width="1.8"/></svg>
<div class="c g" style="left:222px;top:452px;width:80px">15.01.09</div>
<div class="c g" style="left:303px;top:452px;width:44px;padding-left:3px">P</div>
<div class="c g" style="left:348px;top:452px;width:116px;padding-left:3px">5/2 munkanap</div>
<div class="c y" style="left:464px;top:452px;width:54px;padding-left:4px;letter-spacing:0.2px">08:00</div>
<div class="c y" style="left:519px;top:452px;width:53px;padding-left:3px;letter-spacing:0.2px">16:30</div>
<div class="c y" style="left:573px;top:452px;width:53px;padding-left:3px;letter-spacing:0.2px">08:00</div>
<div class="c w" style="left:627px;top:452px;width:80px;padding-left:3px;letter-spacing:0.28px">30 perces</div>
<div class="c k w" style="left:708px;top:452px;width:62px">:</div>
<div class="c k w" style="left:771px;top:452px;width:53px">:</div>
<div class="c k w" style="left:825px;top:452px;width:53px">:</div>
<div class="c k w" style="left:879px;top:452px;width:53px">:</div>
<div class="c k w" style="left:933px;top:452px;width:53px">:</div>
<div class="c k w" style="left:987px;top:452px;width:53px">:</div>
<div class="c k w" style="left:1041px;top:452px;width:53px">:</div>
<div class="c k w" style="left:1095px;top:452px;width:53px">:</div>
<div class="c k w" style="left:1149px;top:452px;width:35px">:</div>
<div class="c k w" style="left:1185px;top:452px;width:53px">:</div>
<div class="c k w" style="left:1239px;top:452px;width:53px">:</div>
<div class="c k w" style="left:1293px;top:452px;width:53px">:</div>
<div class="c k w" style="left:1347px;top:452px;width:53px">:</div>
<div class="c e" style="left:194px;top:476px;width:27px"></div>
<svg style="left:199px;top:479px" width="17" height="17" viewBox="0 0 17 17"><rect x="0.5" y="0.5" width="16" height="16" fill="#fff" stroke="#b4b4b4"/><path d="M3 9.6L6.3 13.8L13.8 3" fill="none" stroke="#222" stroke-width="1.8"/></svg>
<div class="c g" style="left:222px;top:476px;width:80px">15.01.10</div>
<div class="c g" style="left:303px;top:476px;width:44px;padding-left:3px">Szo</div>
<div class="c g" style="left:348px;top:476px;width:116px;padding-left:3px">5/2 munkanap</div>
<div class="c y" style="left:464px;top:476px;width:54px;padding-left:4px;letter-spacing:0.2px">08:00</div>
<div class="c y" style="left:519px;top:476px;width:53px;padding-left:3px;letter-spacing:0.2px">16:30</div>
<div class="c y" style="left:573px;top:476px;width:53px;padding-left:3px;letter-spacing:0.2px">08:00</div>
<div class="c e" style="left:627px;top:476px;width:80px;padding-left:3px;letter-spacing:0.28px">30 perces</div>
<div class="c k e" style="left:708px;top:476px;width:62px">:</div>
<div class="c k e" style="left:771px;top:476px;width:53px">:</div>
<div class="c k e" style="left:825px;top:476px;width:53px">:</div>
<div class="c k e" style="left:879px;top:476px;width:53px">:</div>
<div class="c k e" style="left:933px;top:476px;width:53px">:</div>
<div class="c k e" style="left:987px;top:476px;width:53px">:</div>
<div class="c k e" style="left:1041px;top:476px;width:53px">:</div>
<div class="c k e" style="left:1095px;top:476px;width:53px">:</div>
<div class="c k e" style="left:1149px;top:476px;width:35px">:</div>
<div class="c k e" style="left:1185px;top:476px;width:53px">:</div>
<div class="c k e" style="left:1239px;top:476px;width:53px">:</div>
<div class="c k e" style="left:1293px;top:476px;width:53px">:</div>
<div class="c k e" style="left:1347px;top:476px;width:53px">:</div>
<div class="c w" style="left:194px;top:500px;width:27px"></div>
<svg style="left:199px;top:503px" width="17" height="17" viewBox="0 0 17 17"><rect x="0.5" y="0.5" width="16" height="16" fill="#fff" stroke="#b4b4b4"/><path d="M3 9.6L6.3 13.8L13.8 3" fill="none" stroke="#222" stroke-width="1.8"/></svg>
<div class="c w" style="left:222px;top:500px;width:80px">15.01.11</div>
<div class="c w" style="left:303px;top:500px;width:44px;padding-left:3px">V</div>
<div class="c w" style="left:348px;top:500px;width:116px;padding-left:3px">Pihenő nap</div>
<div class="c k w" style="left:465px;top:500px;width:53px">:</div>
<div class="c k w" style="left:519px;top:500px;width:53px">:</div>
<div class="c k w" style="left:573px;top:500px;width:53px">:</div>
<div class="c w" style="left:627px;top:500px;width:80px;padding-left:3px"></div>
<div class="c k w" style="left:708px;top:500px;width:62px">:</div>
<div class="c k w" style="left:771px;top:500px;width:53px">:</div>
<div class="c k w" style="left:825px;top:500px;width:53px">:</div>
<div class="c k w" style="left:879px;top:500px;width:53px">:</div>
<div class="c k w" style="left:933px;top:500px;width:53px">:</div>
<div class="c k w" style="left:987px;top:500px;width:53px">:</div>
<div class="c k w" style="left:1041px;top:500px;width:53px">:</div>
<div class="c k w" style="left:1095px;top:500px;width:53px">:</div>
<div class="c k w" style="left:1149px;top:500px;width:35px">:</div>
<div class="c k w" style="left:1185px;top:500px;width:53px">:</div>
<div class="c k w" style="left:1239px;top:500px;width:53px">:</div>
<div class="c k w" style="left:1293px;top:500px;width:53px">:</div>
<div class="c k w" style="left:1347px;top:500px;width:53px">:</div>
<div class="c e" style="left:194px;top:524px;width:27px"></div>
<svg style="left:199px;top:527px" width="17" height="17" viewBox="0 0 17 17"><rect x="0.5" y="0.5" width="16" height="16" fill="#fff" stroke="#b4b4b4"/><path d="M3 9.6L6.3 13.8L13.8 3" fill="none" stroke="#222" stroke-width="1.8"/></svg>
<div class="c g" style="left:222px;top:524px;width:80px">15.01.12</div>
<div class="c g" style="left:303px;top:524px;width:44px;padding-left:3px">H</div>
<div class="c g" style="left:348px;top:524px;width:116px;padding-left:3px">5/2 munkanap</div>
<div class="c y" style="left:464px;top:524px;width:54px;padding-left:4px;letter-spacing:0.2px">08:00</div>
<div class="c y" style="left:519px;top:524px;width:53px;padding-left:3px;letter-spacing:0.2px">16:30</div>
<div class="c y" style="left:573px;top:524px;width:53px;padding-left:3px;letter-spacing:0.2px">08:00</div>
<div class="c e" style="left:627px;top:524px;width:80px;padding-left:3px;letter-spacing:0.28px">30 perces</div>
<div class="c k e" style="left:708px;top:524px;width:62px">:</div>
<div class="c k e" style="left:771px;top:524px;width:53px">:</div>
<div class="c k e" style="left:825px;top:524px;width:53px">:</div>
<div class="c k e" style="left:879px;top:524px;width:53px">:</div>
<div class="c k e" style="left:933px;top:524px;width:53px">:</div>
<div class="c k e" style="left:987px;top:524px;width:53px">:</div>
<div class="c k e" style="left:1041px;top:524px;width:53px">:</div>
<div class="c k e" style="left:1095px;top:524px;width:53px">:</div>
<div class="c k e" style="left:1149px;top:524px;width:35px">:</div>
<div class="c k e" style="left:1185px;top:524px;width:53px">:</div>
<div class="c k e" style="left:1239px;top:524px;width:53px">:</div>
<div class="c k e" style="left:1293px;top:524px;width:53px">:</div>
<div class="c k e" style="left:1347px;top:524px;width:53px">:</div>
<div class="c w" style="left:194px;top:548px;width:27px"></div>
<svg style="left:199px;top:551px" width="17" height="17" viewBox="0 0 17 17"><rect x="0.5" y="0.5" width="16" height="16" fill="#fff" stroke="#b4b4b4"/><path d="M3 9.6L6.3 13.8L13.8 3" fill="none" stroke="#222" stroke-width="1.8"/></svg>
<div class="c g" style="left:222px;top:548px;width:80px">15.01.13</div>
<div class="c g" style="left:303px;top:548px;width:44px;padding-left:3px">K</div>
<div class="c g" style="left:348px;top:548px;width:116px;padding-left:3px">5/2 munkanap</div>
<div class="c y" style="left:464px;top:548px;width:54px;padding-left:4px;letter-spacing:0.2px">08:00</div>
<div class="c y" style="left:519px;top:548px;width:53px;padding-left:3px;letter-spacing:0.2px">16:30</div>
<div class="c y" style="left:573px;top:548px;width:53px;padding-left:3px;letter-spacing:0.2px">08:00</div>
<div class="c w" style="left:627px;top:548px;width:80px;padding-left:3px;letter-spacing:0.28px">30 perces</div>
<div class="c k w" style="left:708px;top:548px;width:62px">:</div>
<div class="c k w" style="left:771px;top:548px;width:53px">:</div>
<div class="c k w" style="left:825px;top:548px;width:53px">:</div>
<div class="c k w" style="left:879px;top:548px;width:53px">:</div>
<div class="c k w" style="left:933px;top:548px;width:53px">:</div>
<div class="c k w" style="left:987px;top:548px;width:53px">:</div>
<div class="c k w" style="left:1041px;top:548px;width:53px">:</div>
<div class="c k w" style="left:1095px;top:548px;width:53px">:</div>
<div class="c k w" style="left:1149px;top:548px;width:35px">:</div>
<div class="c k w" style="left:1185px;top:548px;width:53px">:</div>
<div class="c k w" style="left:1239px;top:548px;width:53px">:</div>
<div class="c k w" style="left:1293px;top:548px;width:53px">:</div>
<div class="c k w" style="left:1347px;top:548px;width:53px">:</div>
<div class="c e" style="left:194px;top:572px;width:27px"></div>
<svg style="left:199px;top:575px" width="17" height="17" viewBox="0 0 17 17"><rect x="0.5" y="0.5" width="16" height="16" fill="#fff" stroke="#b4b4b4"/><path d="M3 9.6L6.3 13.8L13.8 3" fill="none" stroke="#222" stroke-width="1.8"/></svg>
<div class="c g" style="left:222px;top:572px;width:80px">15.01.14</div>
<div class="c g" style="left:303px;top:572px;width:44px;padding-left:3px">Sz</div>
<div class="c g" style="left:348px;top:572px;width:116px;padding-left:3px">5/2 munkanap</div>
<div class="c y" style="left:464px;top:572px;width:54px;padding-left:4px;letter-spacing:0.2px">08:00</div>
<div class="c y" style="left:519px;top:572px;width:53px;padding-left:3px;letter-spacing:0.2px">16:30</div>
<div class="c y" style="left:573px;top:572px;width:53px;padding-left:3px;letter-spacing:0.2px">08:00</div>
<div class="c e" style="left:627px;top:572px;width:80px;padding-left:3px;letter-spacing:0.28px">30 perces</div>
<div class="c k e" style="left:708px;top:572px;width:62px">:</div>
<div class="c k e" style="left:771px;top:572px;width:53px">:</div>
<div class="c k e" style="left:825px;top:572px;width:53px">:</div>
<div class="c k e" style="left:879px;top:572px;width:53px">:</div>
<div class="c k e" style="left:933px;top:572px;width:53px">:</div>
<div class="c k e" style="left:987px;top:572px;width:53px">:</div>
<div class="c k e" style="left:1041px;top:572px;width:53px">:</div>
<div class="c k e" style="left:1095px;top:572px;width:53px">:</div>
<div class="c k e" style="left:1149px;top:572px;width:35px">:</div>
<div class="c k e" style="left:1185px;top:572px;width:53px">:</div>
<div class="c k e" style="left:1239px;top:572px;width:53px">:</div>
<div class="c k e" style="left:1293px;top:572px;width:53px">:</div>
<div class="c k e" style="left:1347px;top:572px;width:53px">:</div>
<div class="c w" style="left:194px;top:596px;width:27px"></div>
<svg style="left:199px;top:599px" width="17" height="17" viewBox="0 0 17 17"><rect x="0.5" y="0.5" width="16" height="16" fill="#fff" stroke="#b4b4b4"/><path d="M3 9.6L6.3 13.8L13.8 3" fill="none" stroke="#222" stroke-width="1.8"/></svg>
<div class="c g" style="left:222px;top:596px;width:80px">15.01.15</div>
<div class="c g" style="left:303px;top:596px;width:44px;padding-left:3px">Cs</div>
<div class="c g" style="left:348px;top:596px;width:116px;padding-left:3px">5/2 munkanap</div>
<div class="c y" style="left:464px;top:596px;width:54px;padding-left:4px;letter-spacing:0.2px">08:00</div>
<div class="c y" style="left:519px;top:596px;width:53px;padding-left:3px;letter-spacing:0.2px">16:30</div>
<div class="c y" style="left:573px;top:596px;width:53px;padding-left:3px;letter-spacing:0.2px">08:00</div>
<div class="c w" style="left:627px;top:596px;width:80px;padding-left:3px;letter-spacing:0.28px">30 perces</div>
<div class="c k w" style="left:708px;top:596px;width:62px">:</div>
<div class="c k w" style="left:771px;top:596px;width:53px">:</div>
<div class="c k w" style="left:825px;top:596px;width:53px">:</div>
<div class="c k w" style="left:879px;top:596px;width:53px">:</div>
<div class="c k w" style="left:933px;top:596px;width:53px">:</div>
<div class="c k w" style="left:987px;top:596px;width:53px">:</div>
<div class="c k w" style="left:1041px;top:596px;width:53px">:</div>
<div class="c k w" style="left:1095px;top:596px;width:53px">:</div>
<div class="c k w" style="left:1149px;top:596px;width:35px">:</div>
<div class="c k w" style="left:1185px;top:596px;width:53px">:</div>
<div class="c k w" style="left:1239px;top:596px;width:53px">:</div>
<div class="c k w" style="left:1293px;top:596px;width:53px">:</div>
<div class="c k w" style="left:1347px;top:596px;width:53px">:</div>
<div class="c e" style="left:194px;top:620px;width:27px"></div>
<svg style="left:199px;top:623px" width="17" height="17" viewBox="0 0 17 17"><rect x="0.5" y="0.5" width="16" height="16" fill="#fff" stroke="#b4b4b4"/><path d="M3 9.6L6.3 13.8L13.8 3" fill="none" stroke="#222" stroke-width="1.8"/></svg>
<div class="c g" style="left:222px;top:620px;width:80px">15.01.16</div>
<div class="c g" style="left:303px;top:620px;width:44px;padding-left:3px">P</div>
<div class="c g" style="left:348px;top:620px;width:116px;padding-left:3px">5/2 munkanap</div>
<div class="c y" style="left:464px;top:620px;width:54px;padding-left:4px;letter-spacing:0.2px">08:00</div>
<div class="c y" style="left:519px;top:620px;width:53px;padding-left:3px;letter-spacing:0.2px">16:30</div>
<div class="c y" style="left:573px;top:620px;width:53px;padding-left:3px;letter-spacing:0.2px">08:00</div>
<div class="c e" style="left:627px;top:620px;width:80px;padding-left:3px;letter-spacing:0.28px">30 perces</div>
<div class="c k e" style="left:708px;top:620px;width:62px">:</div>
<div class="c k e" style="left:771px;top:620px;width:53px">:</div>
<div class="c k e" style="left:825px;top:620px;width:53px">:</div>
<div class="c k e" style="left:879px;top:620px;width:53px">:</div>
<div class="c k e" style="left:933px;top:620px;width:53px">:</div>
<div class="c k e" style="left:987px;top:620px;width:53px">:</div>
<div class="c k e" style="left:1041px;top:620px;width:53px">:</div>
<div class="c k e" style="left:1095px;top:620px;width:53px">:</div>
<div class="c k e" style="left:1149px;top:620px;width:35px">:</div>
<div class="c k e" style="left:1185px;top:620px;width:53px">:</div>
<div class="c k e" style="left:1239px;top:620px;width:53px">:</div>
<div class="c k e" style="left:1293px;top:620px;width:53px">:</div>
<div class="c k e" style="left:1347px;top:620px;width:53px">:</div>
<div class="c w" style="left:194px;top:644px;width:27px"></div>
<svg style="left:199px;top:647px" width="17" height="17" viewBox="0 0 17 17"><rect x="0.5" y="0.5" width="16" height="16" fill="#fff" stroke="#b4b4b4"/><path d="M3 9.6L6.3 13.8L13.8 3" fill="none" stroke="#222" stroke-width="1.8"/></svg>
<div class="c w" style="left:222px;top:644px;width:80px">15.01.17</div>
<div class="c w" style="left:303px;top:644px;width:44px;padding-left:3px">Szo</div>
<div class="c w" style="left:348px;top:644px;width:116px;padding-left:3px">Pihenő nap</div>
<div class="c k w" style="left:465px;top:644px;width:53px">:</div>
<div class="c k w" style="left:519px;top:644px;width:53px">:</div>
<div class="c k w" style="left:573px;top:644px;width:53px">:</div>
<div class="c w" style="left:627px;top:644px;width:80px;padding-left:3px"></div>
<div class="c k w" style="left:708px;top:644px;width:62px">:</div>
<div class="c k w" style="left:771px;top:644px;width:53px">:</div>
<div class="c k w" style="left:825px;top:644px;width:53px">:</div>
<div class="c k w" style="left:879px;top:644px;width:53px">:</div>
<div class="c k w" style="left:933px;top:644px;width:53px">:</div>
<div class="c k w" style="left:987px;top:644px;width:53px">:</div>
<div class="c k w" style="left:1041px;top:644px;width:53px">:</div>
<div class="c k w" style="left:1095px;top:644px;width:53px">:</div>
<div class="c k w" style="left:1149px;top:644px;width:35px">:</div>
<div class="c k w" style="left:1185px;top:644px;width:53px">:</div>
<div class="c k w" style="left:1239px;top:644px;width:53px">:</div>
<div class="c k w" style="left:1293px;top:644px;width:53px">:</div>
<div class="c k w" style="left:1347px;top:644px;width:53px">:</div>
<div class="c e" style="left:194px;top:668px;width:27px"></div>
<svg style="left:199px;top:671px" width="17" height="17" viewBox="0 0 17 17"><rect x="0.5" y="0.5" width="16" height="16" fill="#fff" stroke="#b4b4b4"/><path d="M3 9.6L6.3 13.8L13.8 3" fill="none" stroke="#222" stroke-width="1.8"/></svg>
<div class="c e" style="left:222px;top:668px;width:80px">15.01.18</div>
<div class="c e" style="left:303px;top:668px;width:44px;padding-left:3px">V</div>
<div class="c e" style="left:348px;top:668px;width:116px;padding-left:3px">Pihenő nap</div>
<div class="c k e" style="left:465px;top:668px;width:53px">:</div>
<div class="c k e" style="left:519px;top:668px;width:53px">:</div>
<div class="c k e" style="left:573px;top:668px;width:53px">:</div>
<div class="c e" style="left:627px;top:668px;width:80px;padding-left:3px"></div>
<div class="c k e" style="left:708px;top:668px;width:62px">:</div>
<div class="c k e" style="left:771px;top:668px;width:53px">:</div>
<div class="c k e" style="left:825px;top:668px;width:53px">:</div>
<div class="c k e" style="left:879px;top:668px;width:53px">:</div>
<div class="c k e" style="left:933px;top:668px;width:53px">:</div>
<div class="c k e" style="left:987px;top:668px;width:53px">:</div>
<div class="c k e" style="left:1041px;top:668px;width:53px">:</div>
<div class="c k e" style="left:1095px;top:668px;width:53px">:</div>
<div class="c k e" style="left:1149px;top:668px;width:35px">:</div>
<div class="c k e" style="left:1185px;top:668px;width:53px">:</div>
<div class="c k e" style="left:1239px;top:668px;width:53px">:</div>
<div class="c k e" style="left:1293px;top:668px;width:53px">:</div>
<div class="c k e" style="left:1347px;top:668px;width:53px">:</div>
<div class="c w" style="left:194px;top:692px;width:27px"></div>
<svg style="left:199px;top:695px" width="17" height="17" viewBox="0 0 17 17"><rect x="0.5" y="0.5" width="16" height="16" fill="#fff" stroke="#b4b4b4"/><path d="M3 9.6L6.3 13.8L13.8 3" fill="none" stroke="#222" stroke-width="1.8"/></svg>
<div class="c g" style="left:222px;top:692px;width:80px">15.01.19</div>
<div class="c g" style="left:303px;top:692px;width:44px;padding-left:3px">H</div>
<div class="c g" style="left:348px;top:692px;width:116px;padding-left:3px">5/2 munkanap</div>
<div class="c y" style="left:464px;top:692px;width:54px;padding-left:4px;letter-spacing:0.2px">08:00</div>
<div class="c y" style="left:519px;top:692px;width:53px;padding-left:3px;letter-spacing:0.2px">16:30</div>
<div class="c y" style="left:573px;top:692px;width:53px;padding-left:3px;letter-spacing:0.2px">08:00</div>
<div class="c w" style="left:627px;top:692px;width:80px;padding-left:3px;letter-spacing:0.28px">30 perces</div>
<div class="c k w" style="left:708px;top:692px;width:62px">:</div>
<div class="c k w" style="left:771px;top:692px;width:53px">:</div>
<div class="c k w" style="left:825px;top:692px;width:53px">:</div>
<div class="c k w" style="left:879px;top:692px;width:53px">:</div>
<div class="c k w" style="left:933px;top:692px;width:53px">:</div>
<div class="c k w" style="left:987px;top:692px;width:53px">:</div>
<div class="c k w" style="left:1041px;top:692px;width:53px">:</div>
<div class="c k w" style="left:1095px;top:692px;width:53px">:</div>
<div class="c k w" style="left:1149px;top:692px;width:35px">:</div>
<div class="c k w" style="left:1185px;top:692px;width:53px">:</div>
<div class="c k w" style="left:1239px;top:692px;width:53px">:</div>
<div class="c k w" style="left:1293px;top:692px;width:53px">:</div>
<div class="c k w" style="left:1347px;top:692px;width:53px">:</div>
<div class="c e" style="left:194px;top:716px;width:27px"></div>
<svg style="left:199px;top:719px" width="17" height="17" viewBox="0 0 17 17"><rect x="0.5" y="0.5" width="16" height="16" fill="#fff" stroke="#b4b4b4"/><path d="M3 9.6L6.3 13.8L13.8 3" fill="none" stroke="#222" stroke-width="1.8"/></svg>
<div class="c g" style="left:222px;top:716px;width:80px">15.01.20</div>
<div class="c g" style="left:303px;top:716px;width:44px;padding-left:3px">K</div>
<div class="c g" style="left:348px;top:716px;width:116px;padding-left:3px">5/2 munkanap</div>
<div class="c y" style="left:464px;top:716px;width:54px;padding-left:4px;letter-spacing:0.2px">08:00</div>
<div class="c y" style="left:519px;top:716px;width:53px;padding-left:3px;letter-spacing:0.2px">16:30</div>
<div class="c y" style="left:573px;top:716px;width:53px;padding-left:3px;letter-spacing:0.2px">08:00</div>
<div class="c e" style="left:627px;top:716px;width:80px;padding-left:3px;letter-spacing:0.28px">30 perces</div>
<div class="c k e" style="left:708px;top:716px;width:62px">:</div>
<div class="c k e" style="left:771px;top:716px;width:53px">:</div>
<div class="c k e" style="left:825px;top:716px;width:53px">:</div>
<div class="c k e" style="left:879px;top:716px;width:53px">:</div>
<div class="c k e" style="left:933px;top:716px;width:53px">:</div>
<div class="c k e" style="left:987px;top:716px;width:53px">:</div>
<div class="c k e" style="left:1041px;top:716px;width:53px">:</div>
<div class="c k e" style="left:1095px;top:716px;width:53px">:</div>
<div class="c k e" style="left:1149px;top:716px;width:35px">:</div>
<div class="c k e" style="left:1185px;top:716px;width:53px">:</div>
<div class="c k e" style="left:1239px;top:716px;width:53px">:</div>
<div class="c k e" style="left:1293px;top:716px;width:53px">:</div>
<div class="c k e" style="left:1347px;top:716px;width:53px">:</div>
<div class="c w" style="left:194px;top:740px;width:27px"></div>
<svg style="left:199px;top:743px" width="17" height="17" viewBox="0 0 17 17"><rect x="0.5" y="0.5" width="16" height="16" fill="#fff" stroke="#b4b4b4"/><path d="M3 9.6L6.3 13.8L13.8 3" fill="none" stroke="#222" stroke-width="1.8"/></svg>
<div class="c g" style="left:222px;top:740px;width:80px">15.01.21</div>
<div class="c g" style="left:303px;top:740px;width:44px;padding-left:3px">Sz</div>
<div class="c g" style="left:348px;top:740px;width:116px;padding-left:3px">5/2 munkanap</div>
<div class="c y" style="left:464px;top:740px;width:54px;padding-left:4px;letter-spacing:0.2px">08:00</div>
<div class="c y" style="left:519px;top:740px;width:53px;padding-left:3px;letter-spacing:0.2px">16:30</div>
<div class="c y" style="left:573px;top:740px;width:53px;padding-left:3px;letter-spacing:0.2px">08:00</div>
<div class="c w" style="left:627px;top:740px;width:80px;padding-left:3px;letter-spacing:0.28px">30 perces</div>
<div class="c k w" style="left:708px;top:740px;width:62px">:</div>
<div class="c k w" style="left:771px;top:740px;width:53px">:</div>
<div class="c k w" style="left:825px;top:740px;width:53px">:</div>
<div class="c k w" style="left:879px;top:740px;width:53px">:</div>
<div class="c k w" style="left:933px;top:740px;width:53px">:</div>
<div class="c k w" style="left:987px;top:740px;width:53px">:</div>
<div class="c k w" style="left:1041px;top:740px;width:53px">:</div>
<div class="c k w" style="left:1095px;top:740px;width:53px">:</div>
<div class="c k w" style="left:1149px;top:740px;width:35px">:</div>
<div class="c k w" style="left:1185px;top:740px;width:53px">:</div>
<div class="c k w" style="left:1239px;top:740px;width:53px">:</div>
<div class="c k w" style="left:1293px;top:740px;width:53px">:</div>
<div class="c k w" style="left:1347px;top:740px;width:53px">:</div>
<div class="c e" style="left:194px;top:764px;width:27px"></div>
<svg style="left:199px;top:767px" width="17" height="17" viewBox="0 0 17 17"><rect x="0.5" y="0.5" width="16" height="16" fill="#fff" stroke="#b4b4b4"/><path d="M3 9.6L6.3 13.8L13.8 3" fill="none" stroke="#222" stroke-width="1.8"/></svg>
<div class="c g" style="left:222px;top:764px;width:80px">15.01.22</div>
<div class="c g" style="left:303px;top:764px;width:44px;padding-left:3px">Cs</div>
<div class="c g" style="left:348px;top:764px;width:116px;padding-left:3px">5/2 munkanap</div>
<div class="c y" style="left:464px;top:764px;width:54px;padding-left:4px;letter-spacing:0.2px">08:00</div>
<div class="c y" style="left:519px;top:764px;width:53px;padding-left:3px;letter-spacing:0.2px">16:30</div>
<div class="c y" style="left:573px;top:764px;width:53px;padding-left:3px;letter-spacing:0.2px">08:00</div>
<div class="c e" style="left:627px;top:764px;width:80px;padding-left:3px;letter-spacing:0.28px">30 perces</div>
<div class="c k e" style="left:708px;top:764px;width:62px">:</div>
<div class="c k e" style="left:771px;top:764px;width:53px">:</div>
<div class="c k e" style="left:825px;top:764px;width:53px">:</div>
<div class="c k e" style="left:879px;top:764px;width:53px">:</div>
<div class="c k e" style="left:933px;top:764px;width:53px">:</div>
<div class="c k e" style="left:987px;top:764px;width:53px">:</div>
<div class="c k e" style="left:1041px;top:764px;width:53px">:</div>
<div class="c k e" style="left:1095px;top:764px;width:53px">:</div>
<div class="c k e" style="left:1149px;top:764px;width:35px">:</div>
<div class="c k e" style="left:1185px;top:764px;width:53px">:</div>
<div class="c k e" style="left:1239px;top:764px;width:53px">:</div>
<div class="c k e" style="left:1293px;top:764px;width:53px">:</div>
<div class="c k e" style="left:1347px;top:764px;width:53px">:</div>
<div class="c w" style="left:194px;top:788px;width:27px"></div>
<svg style="left:199px;top:791px" width="17" height="17" viewBox="0 0 17 17"><rect x="0.5" y="0.5" width="16" height="16" fill="#fff" stroke="#b4b4b4"/><path d="M3 9.6L6.3 13.8L13.8 3" fill="none" stroke="#222" stroke-width="1.8"/></svg>
<div class="c g" style="left:222px;top:788px;width:80px">15.01.23</div>
<div class="c g" style="left:303px;top:788px;width:44px;padding-left:3px">P</div>
<div class="c g" style="left:348px;top:788px;width:116px;padding-left:3px">5/2 munkanap</div>
<div class="c y" style="left:464px;top:788px;width:54px;padding-left:4px;letter-spacing:0.2px">08:00</div>
<div class="c y" style="left:519px;top:788px;width:53px;padding-left:3px;letter-spacing:0.2px">16:30</div>
<div class="c y" style="left:573px;top:788px;width:53px;padding-left:3px;letter-spacing:0.2px">08:00</div>
<div class="c w" style="left:627px;top:788px;width:80px;padding-left:3px;letter-spacing:0.28px">30 perces</div>
<div class="c k w" style="left:708px;top:788px;width:62px">:</div>
<div class="c k w" style="left:771px;top:788px;width:53px">:</div>
<div class="c k w" style="left:825px;top:788px;width:53px">:</div>
<div class="c k w" style="left:879px;top:788px;width:53px">:</div>
<div class="c k w" style="left:933px;top:788px;width:53px">:</div>
<div class="c k w" style="left:987px;top:788px;width:53px">:</div>
<div class="c k w" style="left:1041px;top:788px;width:53px">:</div>
<div class="c k w" style="left:1095px;top:788px;width:53px">:</div>
<div class="c k w" style="left:1149px;top:788px;width:35px">:</div>
<div class="c k w" style="left:1185px;top:788px;width:53px">:</div>
<div class="c k w" style="left:1239px;top:788px;width:53px">:</div>
<div class="c k w" style="left:1293px;top:788px;width:53px">:</div>
<div class="c k w" style="left:1347px;top:788px;width:53px">:</div>
<div class="c e" style="left:194px;top:812px;width:27px"></div>
<svg style="left:199px;top:815px" width="17" height="17" viewBox="0 0 17 17"><rect x="0.5" y="0.5" width="16" height="16" fill="#fff" stroke="#b4b4b4"/><path d="M3 9.6L6.3 13.8L13.8 3" fill="none" stroke="#222" stroke-width="1.8"/></svg>
<div class="c e" style="left:222px;top:812px;width:80px">15.01.24</div>
<div class="c e" style="left:303px;top:812px;width:44px;padding-left:3px">Szo</div>
<div class="c e" style="left:348px;top:812px;width:116px;padding-left:3px">Pihenő nap</div>
<div class="c k e" style="left:465px;top:812px;width:53px">:</div>
<div class="c k e" style="left:519px;top:812px;width:53px">:</div>
<div class="c k e" style="left:573px;top:812px;width:53px">:</div>
<div class="c e" style="left:627px;top:812px;width:80px;padding-left:3px"></div>
<div class="c k e" style="left:708px;top:812px;width:62px">:</div>
<div class="c k e" style="left:771px;top:812px;width:53px">:</div>
<div class="c k e" style="left:825px;top:812px;width:53px">:</div>
<div class="c k e" style="left:879px;top:812px;width:53px">:</div>
<div class="c k e" style="left:933px;top:812px;width:53px">:</div>
<div class="c k e" style="left:987px;top:812px;width:53px">:</div>
<div class="c k e" style="left:1041px;top:812px;width:53px">:</div>
<div class="c k e" style="left:1095px;top:812px;width:53px">:</div>
<div class="c k e" style="left:1149px;top:812px;width:35px">:</div>
<div class="c k e" style="left:1185px;top:812px;width:53px">:</div>
<div class="c k e" style="left:1239px;top:812px;width:53px">:</div>
<div class="c k e" style="left:1293px;top:812px;width:53px">:</div>
<div class="c k e" style="left:1347px;top:812px;width:53px">:</div>
<div class="c w" style="left:194px;top:836px;width:27px"></div>
<svg style="left:199px;top:839px" width="17" height="17" viewBox="0 0 17 17"><rect x="0.5" y="0.5" width="16" height="16" fill="#fff" stroke="#b4b4b4"/><path d="M3 9.6L6.3 13.8L13.8 3" fill="none" stroke="#222" stroke-width="1.8"/></svg>
<div class="c w" style="left:222px;top:836px;width:80px">15.01.25</div>
<div class="c w" style="left:303px;top:836px;width:44px;padding-left:3px">V</div>
<div class="c w" style="left:348px;top:836px;width:116px;padding-left:3px">Pihenő nap</div>
<div class="c k w" style="left:465px;top:836px;width:53px">:</div>
<div class="c k w" style="left:519px;top:836px;width:53px">:</div>
<div class="c k w" style="left:573px;top:836px;width:53px">:</div>
<div class="c w" style="left:627px;top:836px;width:80px;padding-left:3px"></div>
<div class="c k w" style="left:708px;top:836px;width:62px">:</div>
<div class="c k w" style="left:771px;top:836px;width:53px">:</div>
<div class="c k w" style="left:825px;top:836px;width:53px">:</div>
<div class="c k w" style="left:879px;top:836px;width:53px">:</div>
<div class="c k w" style="left:933px;top:836px;width:53px">:</div>
<div class="c k w" style="left:987px;top:836px;width:53px">:</div>
<div class="c k w" style="left:1041px;top:836px;width:53px">:</div>
<div class="c k w" style="left:1095px;top:836px;width:53px">:</div>
<div class="c k w" style="left:1149px;top:836px;width:35px">:</div>
<div class="c k w" style="left:1185px;top:836px;width:53px">:</div>
<div class="c k w" style="left:1239px;top:836px;width:53px">:</div>
<div class="c k w" style="left:1293px;top:836px;width:53px">:</div>
<div class="c k w" style="left:1347px;top:836px;width:53px">:</div>
<div class="c e" style="left:194px;top:860px;width:27px"></div>
<svg style="left:199px;top:863px" width="17" height="17" viewBox="0 0 17 17"><rect x="0.5" y="0.5" width="16" height="16" fill="#fff" stroke="#b4b4b4"/><path d="M3 9.6L6.3 13.8L13.8 3" fill="none" stroke="#222" stroke-width="1.8"/></svg>
<div class="c g" style="left:222px;top:860px;width:80px">15.01.26</div>
<div class="c g" style="left:303px;top:860px;width:44px;padding-left:3px">H</div>
<div class="c g" style="left:348px;top:860px;width:116px;padding-left:3px">5/2 munkanap</div>
<div class="c y" style="left:464px;top:860px;width:54px;padding-left:4px;letter-spacing:0.2px">08:00</div>
<div class="c y" style="left:519px;top:860px;width:53px;padding-left:3px;letter-spacing:0.2px">16:30</div>
<div class="c y" style="left:573px;top:860px;width:53px;padding-left:3px;letter-spacing:0.2px">08:00</div>
<div class="c e" style="left:627px;top:860px;width:80px;padding-left:3px;letter-spacing:0.28px">30 perces</div>
<div class="c k e" style="left:708px;top:860px;width:62px">:</div>
<div class="c k e" style="left:771px;top:860px;width:53px">:</div>
<div class="c k e" style="left:825px;top:860px;width:53px">:</div>
<div class="c k e" style="left:879px;top:860px;width:53px">:</div>
<div class="c k e" style="left:933px;top:860px;width:53px">:</div>
<div class="c k e" style="left:987px;top:860px;width:53px">:</div>
<div class="c k e" style="left:1041px;top:860px;width:53px">:</div>
<div class="c k e" style="left:1095px;top:860px;width:53px">:</div>
<div class="c k e" style="left:1149px;top:860px;width:35px">:</div>
<div class="c k e" style="left:1185px;top:860px;width:53px">:</div>
<div class="c k e" style="left:1239px;top:860px;width:53px">:</div>
<div class="c k e" style="left:1293px;top:860px;width:53px">:</div>
<div class="c k e" style="left:1347px;top:860px;width:53px">:</div>
<div class="c w" style="left:194px;top:884px;width:27px"></div>
<svg style="left:199px;top:887px" width="17" height="17" viewBox="0 0 17 17"><rect x="0.5" y="0.5" width="16" height="16" fill="#fff" stroke="#b4b4b4"/><path d="M3 9.6L6.3 13.8L13.8 3" fill="none" stroke="#222" stroke-width="1.8"/></svg>
<div class="c g" style="left:222px;top:884px;width:80px">15.01.27</div>
<div class="c g" style="left:303px;top:884px;width:44px;padding-left:3px">K</div>
<div class="c g" style="left:348px;top:884px;width:116px;padding-left:3px">5/2 munkanap</div>
<div class="c y" style="left:464px;top:884px;width:54px;padding-left:4px;letter-spacing:0.2px">08:00</div>
<div class="c y" style="left:519px;top:884px;width:53px;padding-left:3px;letter-spacing:0.2px">16:30</div>
<div class="c y" style="left:573px;top:884px;width:53px;padding-left:3px;letter-spacing:0.2px">08:00</div>
<div class="c w" style="left:627px;top:884px;width:80px;padding-left:3px;letter-spacing:0.28px">30 perces</div>
<div class="c k w" style="left:708px;top:884px;width:62px">:</div>
<div class="c k w" style="left:771px;top:884px;width:53px">:</div>
<div class="c k w" style="left:825px;top:884px;width:53px">:</div>
<div class="c k w" style="left:879px;top:884px;width:53px">:</div>
<div class="c k w" style="left:933px;top:884px;width:53px">:</div>
<div class="c k w" style="left:987px;top:884px;width:53px">:</div>
<div class="c k w" style="left:1041px;top:884px;width:53px">:</div>
<div class="c k w" style="left:1095px;top:884px;width:53px">:</div>
<div class="c k w" style="left:1149px;top:884px;width:35px">:</div>
<div class="c k w" style="left:1185px;top:884px;width:53px">:</div>
<div class="c k w" style="left:1239px;top:884px;width:53px">:</div>
<div class="c k w" style="left:1293px;top:884px;width:53px">:</div>
<div class="c k w" style="left:1347px;top:884px;width:53px">:</div>
<div class="c e" style="left:194px;top:908px;width:27px"></div>
<svg style="left:199px;top:911px" width="17" height="17" viewBox="0 0 17 17"><rect x="0.5" y="0.5" width="16" height="16" fill="#fff" stroke="#b4b4b4"/><path d="M3 9.6L6.3 13.8L13.8 3" fill="none" stroke="#222" stroke-width="1.8"/></svg>
<div class="c g" style="left:222px;top:908px;width:80px">15.01.28</div>
<div class="c g" style="left:303px;top:908px;width:44px;padding-left:3px">Sz</div>
<div class="c g" style="left:348px;top:908px;width:116px;padding-left:3px">5/2 munkanap</div>
<div class="c y" style="left:464px;top:908px;width:54px;padding-left:4px;letter-spacing:0.2px">08:00</div>
<div class="c y" style="left:519px;top:908px;width:53px;padding-left:3px;letter-spacing:0.2px">16:30</div>
<div class="c y" style="left:573px;top:908px;width:53px;padding-left:3px;letter-spacing:0.2px">08:00</div>
<div class="c e" style="left:627px;top:908px;width:80px;padding-left:3px;letter-spacing:0.28px">30 perces</div>
<div class="c k e" style="left:708px;top:908px;width:62px">:</div>
<div class="c k e" style="left:771px;top:908px;width:53px">:</div>
<div class="c k e" style="left:825px;top:908px;width:53px">:</div>
<div class="c k e" style="left:879px;top:908px;width:53px">:</div>
<div class="c k e" style="left:933px;top:908px;width:53px">:</div>
<div class="c k e" style="left:987px;top:908px;width:53px">:</div>
<div class="c k e" style="left:1041px;top:908px;width:53px">:</div>
<div class="c k e" style="left:1095px;top:908px;width:53px">:</div>
<div class="c k e" style="left:1149px;top:908px;width:35px">:</div>
<div class="c k e" style="left:1185px;top:908px;width:53px">:</div>
<div class="c k e" style="left:1239px;top:908px;width:53px">:</div>
<div class="c k e" style="left:1293px;top:908px;width:53px">:</div>
<div class="c k e" style="left:1347px;top:908px;width:53px">:</div>
<div class="c w" style="left:194px;top:932px;width:27px"></div>
<svg style="left:199px;top:935px" width="17" height="17" viewBox="0 0 17 17"><rect x="0.5" y="0.5" width="16" height="16" fill="#fff" stroke="#b4b4b4"/><path d="M3 9.6L6.3 13.8L13.8 3" fill="none" stroke="#222" stroke-width="1.8"/></svg>
<div class="c g" style="left:222px;top:932px;width:80px">15.01.29</div>
<div class="c g" style="left:303px;top:932px;width:44px;padding-left:3px">Cs</div>
<div class="c g" style="left:348px;top:932px;width:116px;padding-left:3px">5/2 munkanap</div>
<div class="c y" style="left:464px;top:932px;width:54px;padding-left:4px;letter-spacing:0.2px">08:00</div>
<div class="c y" style="left:519px;top:932px;width:53px;padding-left:3px;letter-spacing:0.2px">16:30</div>
<div class="c y" style="left:573px;top:932px;width:53px;padding-left:3px;letter-spacing:0.2px">08:00</div>
<div class="c w" style="left:627px;top:932px;width:80px;padding-left:3px;letter-spacing:0.28px">30 perces</div>
<div class="c k w" style="left:708px;top:932px;width:62px">:</div>
<div class="c k w" style="left:771px;top:932px;width:53px">:</div>
<div class="c k w" style="left:825px;top:932px;width:53px">:</div>
<div class="c k w" style="left:879px;top:932px;width:53px">:</div>
<div class="c k w" style="left:933px;top:932px;width:53px">:</div>
<div class="c k w" style="left:987px;top:932px;width:53px">:</div>
<div class="c k w" style="left:1041px;top:932px;width:53px">:</div>
<div class="c k w" style="left:1095px;top:932px;width:53px">:</div>
<div class="c k w" style="left:1149px;top:932px;width:35px">:</div>
<div class="c k w" style="left:1185px;top:932px;width:53px">:</div>
<div class="c k w" style="left:1239px;top:932px;width:53px">:</div>
<div class="c k w" style="left:1293px;top:932px;width:53px">:</div>
<div class="c k w" style="left:1347px;top:932px;width:53px">:</div>
<div class="c e" style="left:194px;top:956px;width:27px"></div>
<svg style="left:199px;top:959px" width="17" height="17" viewBox="0 0 17 17"><rect x="0.5" y="0.5" width="16" height="16" fill="#fff" stroke="#b4b4b4"/><path d="M3 9.6L6.3 13.8L13.8 3" fill="none" stroke="#222" stroke-width="1.8"/></svg>
<div class="c g" style="left:222px;top:956px;width:80px">15.01.30</div>
<div class="c g" style="left:303px;top:956px;width:44px;padding-left:3px">P</div>
<div class="c g" style="left:348px;top:956px;width:116px;padding-left:3px">5/2 munkanap</div>
<div class="c y" style="left:464px;top:956px;width:54px;padding-left:4px;letter-spacing:0.2px">08:00</div>
<div class="c y" style="left:519px;top:956px;width:53px;padding-left:3px;letter-spacing:0.2px">16:30</div>
<div class="c y" style="left:573px;top:956px;width:53px;padding-left:3px;letter-spacing:0.2px">08:00</div>
<div class="c e" style="left:627px;top:956px;width:80px;padding-left:3px;letter-spacing:0.28px">30 perces</div>
<div class="c k e" style="left:708px;top:956px;width:62px">:</div>
<div class="c k e" style="left:771px;top:956px;width:53px">:</div>
<div class="c k e" style="left:825px;top:956px;width:53px">:</div>
<div class="c k e" style="left:879px;top:956px;width:53px">:</div>
<div class="c k e" style="left:933px;top:956px;width:53px">:</div>
<div class="c k e" style="left:987px;top:956px;width:53px">:</div>
<div class="c k e" style="left:1041px;top:956px;width:53px">:</div>
<div class="c k e" style="left:1095px;top:956px;width:53px">:</div>
<div class="c k e" style="left:1149px;top:956px;width:35px">:</div>
<div class="c k e" style="left:1185px;top:956px;width:53px">:</div>
<div class="c k e" style="left:1239px;top:956px;width:53px">:</div>
<div class="c k e" style="left:1293px;top:956px;width:53px">:</div>
<div class="c k e" style="left:1347px;top:956px;width:53px">:</div>
<div class="c w" style="left:194px;top:980px;width:27px"></div>
<svg style="left:199px;top:983px" width="17" height="17" viewBox="0 0 17 17"><rect x="0.5" y="0.5" width="16" height="16" fill="#fff" stroke="#b4b4b4"/><path d="M3 9.6L6.3 13.8L13.8 3" fill="none" stroke="#222" stroke-width="1.8"/></svg>
<div class="c w" style="left:222px;top:980px;width:80px">15.01.31</div>
<div class="c w" style="left:303px;top:980px;width:44px;padding-left:3px">Szo</div>
<div class="c w" style="left:348px;top:980px;width:116px;padding-left:3px">Pihenő nap</div>
<div class="c k w" style="left:465px;top:980px;width:53px">:</div>
<div class="c k w" style="left:519px;top:980px;width:53px">:</div>
<div class="c k w" style="left:573px;top:980px;width:53px">:</div>
<div class="c w" style="left:627px;top:980px;width:80px;padding-left:3px"></div>
<div class="c k w" style="left:708px;top:980px;width:62px">:</div>
<div class="c k w" style="left:771px;top:980px;width:53px">:</div>
<div class="c k w" style="left:825px;top:980px;width:53px">:</div>
<div class="c k w" style="left:879px;top:980px;width:53px">:</div>
<div class="c k w" style="left:933px;top:980px;width:53px">:</div>
<div class="c k w" style="left:987px;top:980px;width:53px">:</div>
<div class="c k w" style="left:1041px;top:980px;width:53px">:</div>
<div class="c k w" style="left:1095px;top:980px;width:53px">:</div>
<div class="c k w" style="left:1149px;top:980px;width:35px">:</div>
<div class="c k w" style="left:1185px;top:980px;width:53px">:</div>
<div class="c k w" style="left:1239px;top:980px;width:53px">:</div>
<div class="c k w" style="left:1293px;top:980px;width:53px">:</div>
<div class="c k w" style="left:1347px;top:980px;width:53px">:</div>
<div class="c h" style="left:194px;top:1004px;width:27px"></div>
<div class="c h" style="left:222px;top:1004px;width:80px"></div>
<div class="c h" style="left:303px;top:1004px;width:44px"></div>
<div class="c h" style="left:348px;top:1004px;width:116px"></div>
<div class="c h" style="left:465px;top:1004px;width:53px"></div>
<div class="c h" style="left:519px;top:1004px;width:53px"></div>
<div class="c h" style="left:573px;top:1004px;width:53px"><span style="position:static;display:block;width:44px;overflow:hidden">168:00</span></div>
<div class="c h" style="left:627px;top:1004px;width:80px"></div>
<div class="c k h" style="left:708px;top:1004px;width:62px">:</div>
<div class="c k h" style="left:771px;top:1004px;width:53px">:</div>
<div class="c k h" style="left:825px;top:1004px;width:53px">:</div>
<div class="c k h" style="left:879px;top:1004px;width:53px">:</div>
<div class="c h" style="left:933px;top:1004px;width:53px"></div>
<div class="c k h" style="left:987px;top:1004px;width:53px">:</div>
<div class="c k h" style="left:1041px;top:1004px;width:53px">:</div>
<div class="c k h" style="left:1095px;top:1004px;width:53px">:</div>
<div class="c k h" style="left:1149px;top:1004px;width:35px">:</div>
<div class="c k h" style="left:1185px;top:1004px;width:53px">:</div>
<div class="c k h" style="left:1239px;top:1004px;width:53px">:</div>
<div class="c k h" style="left:1293px;top:1004px;width:53px">:</div>
<div class="c k h" style="left:1347px;top:1004px;width:53px">:</div>
<svg style="left:1406px;top:180px" width="13" height="13" viewBox="0 0 14 14"><path d="M1 1L13 13M13 1L1 13" stroke="#bcbcbc" stroke-width="1.7"/></svg>
<svg style="left:1406px;top:243px" width="13" height="8" viewBox="0 0 13 8"><path d="M0.8 7.2L6.5 1.5L12.2 7.2" fill="none" stroke="#bcbcbc" stroke-width="1.7"/></svg>
<svg style="left:1406px;top:989px" width="13" height="8" viewBox="0 0 13 8"><path d="M0.8 0.8L6.5 6.5L12.2 0.8" fill="none" stroke="#bcbcbc" stroke-width="1.7"/></svg>
<svg style="left:1406px;top:1008px" width="14" height="14" viewBox="0 0 14 14"><path d="M1 8L4.5 12.5L13 1" fill="none" stroke="#d0d0d0" stroke-width="2"/></svg>
</body></html>
